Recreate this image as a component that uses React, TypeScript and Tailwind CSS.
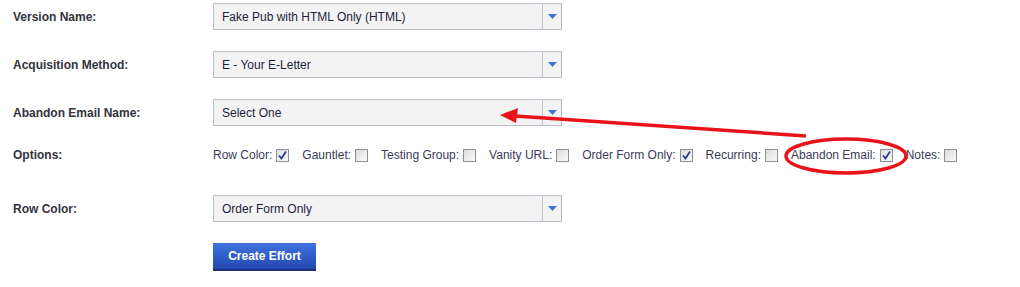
import React from "react";

const font = { fontFamily: '"Liberation Sans", Arial, sans-serif' };

function Select({ value }: { value: string }) {
  return (
    <div className="flex h-[27px] w-[349px] border border-[#b9bcc6] bg-[#f3f3f3]">
      <div className="flex flex-1 items-center pl-[8px] text-[12px] text-[#1e1e3a]">{value}</div>
      <div className="flex w-[19px] items-center justify-center border-l border-[#c4c6cc]">
        <svg width="9" height="5" viewBox="0 0 9 5">
          <polygon points="0,0 9,0 4.5,5" fill="#3f6fd8" />
        </svg>
      </div>
    </div>
  );
}

function Check({ checked }: { checked?: boolean }) {
  return (
    <span className="ml-[4px] inline-flex h-[13px] w-[13px] items-center justify-center border border-[#8f8f9a] bg-gradient-to-br from-[#dcdcdc] to-[#fbfbfb]">
      {checked && (
        <svg width="9" height="9" viewBox="0 0 9 9">
          <path d="M1 4.5 L3.5 7.5 L8 0.5" stroke="#2c3d8c" strokeWidth="1.8" fill="none" />
        </svg>
      )}
    </span>
  );
}

function Row({ label, children }: { label: string; children: React.ReactNode }) {
  return (
    <div className="flex items-center h-[27px] mb-[21px]">
      <div className="w-[213px] pl-[13px] text-[12px] font-bold text-[#33333d]">{label}</div>
      {children}
    </div>
  );
}

const options: [string, boolean][] = [
  ["Row Color:", true],
  ["Gauntlet:", false],
  ["Testing Group:", false],
  ["Vanity URL:", false],
  ["Order Form Only:", true],
  ["Recurring:", false],
  ["Abandon Email:", true],
  ["Notes:", false],
];

export default function App() {
  return (
    <div className="relative h-[287px] w-[1020px] bg-white pt-[3px]" style={font}>
      <Row label="Version Name:">
        <Select value="Fake Pub with HTML Only (HTML)" />
      </Row>
      <Row label="Acquisition Method:">
        <Select value="E - Your E-Letter" />
      </Row>
      <Row label="Abandon Email Name:">
        <Select value="Select One" />
      </Row>
      <div className="flex items-center h-[20px] mt-[-2px] mb-[30px]">
        <div className="w-[213px] pl-[13px] text-[12px] font-bold text-[#33333d]">Options:</div>
        <div className="flex items-center gap-[13px] text-[12px] text-[#3b3b5a]">
          {options.map(([l, c]) => (
            <span key={l} className="inline-flex items-center">
              {l}
              <Check checked={c} />
            </span>
          ))}
        </div>
      </div>
      <Row label="Row Color:">
        <Select value="Order Form Only" />
      </Row>
      <div className="flex">
        <div className="w-[213px]" />
        <button className="h-[28px] w-[103px] border-b-2 border-[#1c2f7a] bg-gradient-to-b from-[#3f74de] to-[#2448b0] text-[12px] font-bold text-white">
          Create Effort
        </button>
      </div>
      <svg className="pointer-events-none absolute left-0 top-0" width="1020" height="287">
        <line x1="806" y1="136" x2="515" y2="116" stroke="#e8141a" strokeWidth="3.5" />
        <polygon points="500,115 518,108 516,123" fill="#e8141a" />
        <ellipse cx="846" cy="156" rx="60" ry="17" fill="none" stroke="#e8141a" strokeWidth="3.5" />
      </svg>
    </div>
  );
}
